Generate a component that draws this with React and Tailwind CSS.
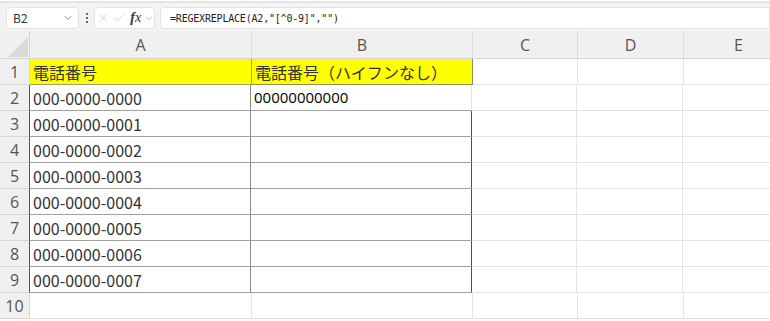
import React from "react";
import { ChevronDown, X, Check } from "lucide-react";

const COLS = [
  { id: "A", w: "w-[222px]" },
  { id: "B", w: "w-[221px]" },
  { id: "C", w: "w-[105px]" },
  { id: "D", w: "w-[106px]" },
  { id: "E", w: "w-[110px]" },
];

const phones = [
  "000-0000-0000",
  "000-0000-0001",
  "000-0000-0002",
  "000-0000-0003",
  "000-0000-0004",
  "000-0000-0005",
  "000-0000-0006",
  "000-0000-0007",
];

const jp = { fontFamily: '"Noto Sans CJK JP", "Noto Sans", sans-serif' };

const FormulaBar = () => (
  <div className="h-[31px] bg-[#f3f3f3] flex items-start pt-[7px] relative">
    <div className="absolute left-0 right-0 top-0 h-[3px] bg-[#e4e4e4] border-t border-white" />
    {/* Name box */}
    <div className="ml-[6px] w-[73px] h-[22px] bg-white rounded-[4px] border border-[#e3e3e3] flex items-center justify-between pl-[6px] pr-[4px]">
      <span className="text-[12px] text-[#333]" style={jp}>B2</span>
      <ChevronDown className="w-[12px] h-[12px] text-[#666]" strokeWidth={1.5} />
    </div>
    <div className="w-[15px] h-[22px] flex flex-col items-center justify-center gap-[2px]">
      <span className="w-[2px] h-[2px] bg-[#666]" />
      <span className="w-[2px] h-[2px] bg-[#666]" />
      <span className="w-[2px] h-[2px] bg-[#666]" />
    </div>
    {/* Cancel / Enter / fx */}
    <div className="w-[61px] h-[22px] bg-white rounded-[4px] border border-[#e3e3e3] flex items-center pl-[2px] gap-[3px]">
      <X className="w-[14px] h-[14px] text-[#bbb]" strokeWidth={1.2} />
      <Check className="w-[14px] h-[14px] text-[#bbb]" strokeWidth={1.2} />
      <span className="text-[14px] italic text-[#333] ml-[2px] leading-none" style={{ fontFamily: '"Liberation Serif", serif' }}>
        <span className="font-bold">f</span>x
      </span>
      <ChevronDown className="w-[11px] h-[11px] text-[#999]" strokeWidth={1.5} />
    </div>
    {/* Formula input */}
    <div className="ml-[5px] flex-1 h-[22px] bg-white rounded-l-[4px] border border-[#e3e3e3] flex items-center pl-[9px]">
      <span className="text-[10px] text-[#222] tracking-[-0.2px]" style={{ fontFamily: '"DejaVu Sans Mono", monospace' }}>
        =REGEXREPLACE(A2,"[^0-9]","")
      </span>
    </div>
  </div>
);

const Header = () => (
  <div className="flex h-[28px] bg-[#f0f0f0] border-b border-[#d6d6d6]">
    <div className="w-[30px] shrink-0 border-r border-[#d6d6d6] relative overflow-hidden">
      <svg className="absolute left-[8px] top-[6px]" width="20" height="20" viewBox="0 0 20 20">
        <polygon points="20,0 20,20 0,20" fill="#dadada" />
      </svg>
    </div>
    {COLS.map((c) => (
      <div
        key={c.id}
        className={`${c.w} shrink-0 border-r border-[#dcdcdc] flex items-center justify-center text-[16px] text-[#555]`}
        style={{ fontFamily: '"Open Sans", sans-serif' }}
      >
        {c.id}
      </div>
    ))}
  </div>
);

const Row = ({ n, children }) => (
  <div className="flex h-[26px]">
    <div
      className="w-[30px] shrink-0 bg-[#f0f0f0] border-r border-b border-[#d6d6d6] flex items-center justify-center text-[16px] text-[#555]"
      style={{ fontFamily: '"Open Sans", sans-serif' }}
    >
      {n}
    </div>
    {children}
  </div>
);

const Blank = ({ w }) => (
  <div className={`${w} shrink-0 border-r border-b border-[#e3e3e3] bg-white`} />
);

export default function App() {
  return (
    <div className="w-[770px] h-[321px] overflow-hidden bg-white">
      <FormulaBar />
      <Header />

      {/* Row 1: yellow heading */}
      <Row n={1}>
        <div className="w-[222px] shrink-0 bg-[#ffff00] border-r border-b border-[#9f9f6a] flex items-center pl-[3px] text-[16px] text-[#333]" style={jp}>
          電話番号
        </div>
        <div className="w-[221px] shrink-0 bg-[#ffff00] border-r border-b border-[#8f8f5a] flex items-center pl-[3px] text-[16px] text-[#333]" style={jp}>
          電話番号（ハイフンなし）
        </div>
        <Blank w="w-[105px]" />
        <Blank w="w-[106px]" />
        <Blank w="w-[110px]" />
      </Row>

      {phones.map((p, i) => (
        <Row key={p} n={i + 2}>
          <div
            className="w-[222px] shrink-0 bg-white border-l border-l-[#555] -ml-px border-r border-r-[#8a8a8a] border-b border-b-[#a0a0a0] flex items-center pl-[3px] text-[16px] text-[#333]"
            style={jp}
          >
            {p}
          </div>
          <div
            className={`shrink-0 bg-white border-b border-b-[#a0a0a0] flex items-center pl-[3px] text-[15px] text-black ${
              i === 0 ? "w-[221px] border-r border-r-[#e3e3e3]" : "border-r-2 border-r-[#505050] w-[222px] -mr-px"
            }`}
            style={{ fontFamily: '"Open Sans", sans-serif' }}
          >
            {i === 0 ? "00000000000" : ""}
          </div>
          <Blank w="w-[105px]" />
          <Blank w="w-[106px]" />
          <Blank w="w-[110px]" />
        </Row>
      ))}

      <Row n={10}>
        <Blank w="w-[222px]" />
        <Blank w="w-[221px]" />
        <Blank w="w-[105px]" />
        <Blank w="w-[106px]" />
        <Blank w="w-[110px]" />
      </Row>
    </div>
  );
}
